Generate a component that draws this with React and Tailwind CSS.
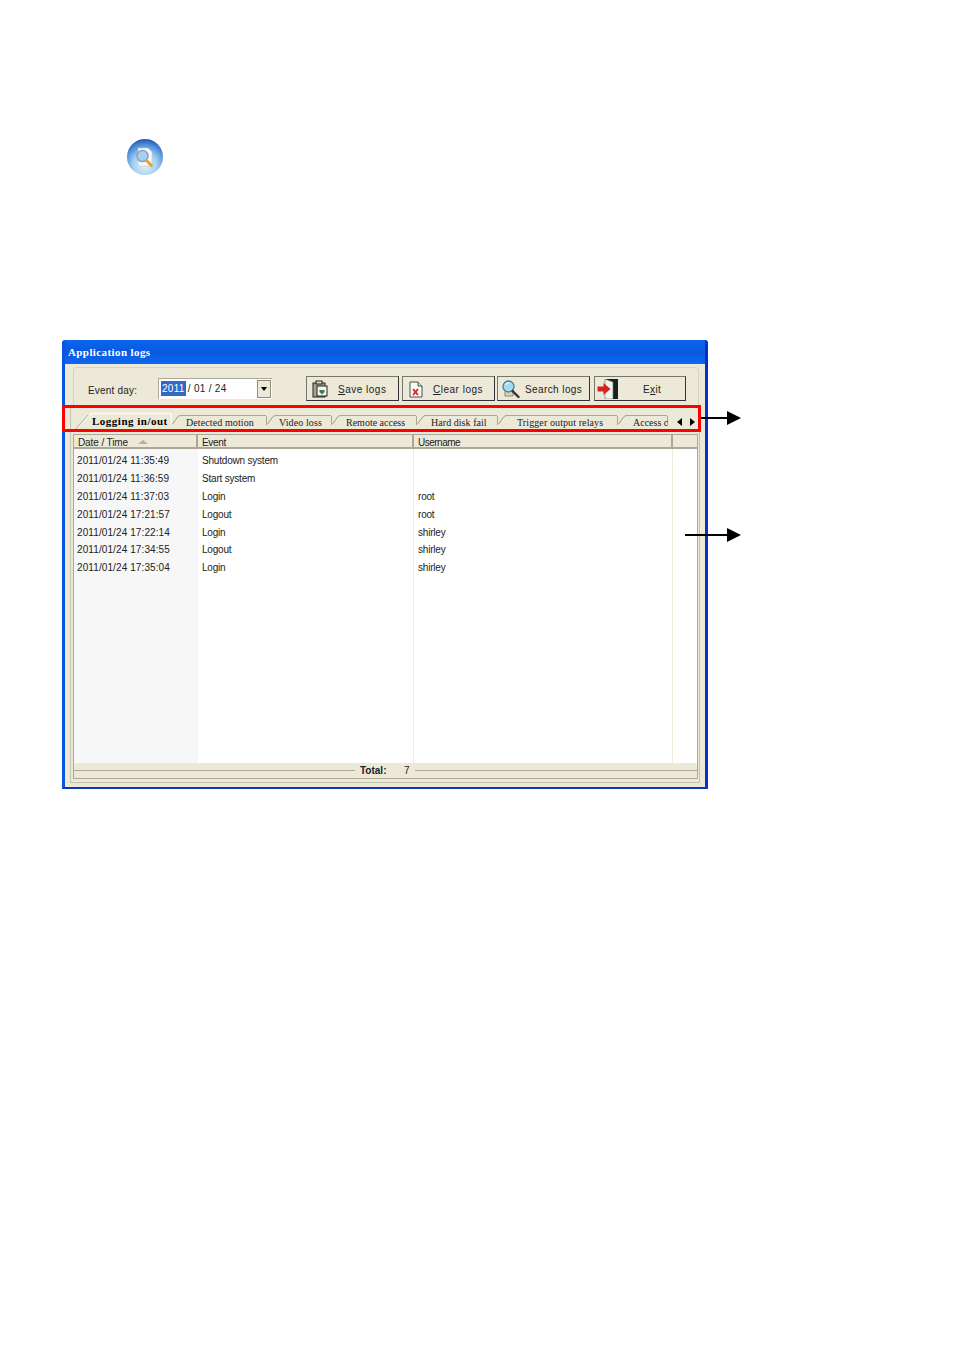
const SANS = 'font-["Liberation_Sans",sans-serif]';
const SERIF = 'font-["Liberation_Serif",serif]';

const TABS = [
  { label: 'Logging in/out', width: 'w-[97px]', text: 'pl-[17px] pb-px font-bold text-[11px] tracking-[0.5px]', active: true },
  { label: 'Detected motion', width: 'w-[95px]', text: 'pl-[14px] pt-px tracking-[0.1px]' },
  { label: 'Video loss', width: 'w-[65px]', text: 'pl-[12px] pt-px tracking-[0.1px]' },
  { label: 'Remote access', width: 'w-[85px]', text: 'pl-[14px] pt-px' },
  { label: 'Hard disk fail', width: 'w-[81px]', text: 'pl-[14px] pt-px tracking-[0.05px]' },
  { label: 'Trigger output relays', width: 'w-[120px]', text: 'pl-[19px] pt-px tracking-[0.1px]' },
  { label: 'Access c', width: 'w-[50px]', text: 'pl-[15px] pt-px' },
];

const ROWS = [
  ['2011/01/24 11:35:49', 'Shutdown system', ''],
  ['2011/01/24 11:36:59', 'Start system', ''],
  ['2011/01/24 11:37:03', 'Login', 'root'],
  ['2011/01/24 17:21:57', 'Logout', 'root'],
  ['2011/01/24 17:22:14', 'Login', 'shirley'],
  ['2011/01/24 17:34:55', 'Logout', 'shirley'],
  ['2011/01/24 17:35:04', 'Login', 'shirley'],
];

function AppIcon() {
  return (
    <svg width="38" height="38" viewBox="0 0 38 38" className="block">
      <defs>
        <radialGradient id="orb" cx="50%" cy="72%" r="72%">
          <stop offset="0%" stopColor="#e4f3fb" />
          <stop offset="45%" stopColor="#a6d2f0" />
          <stop offset="78%" stopColor="#4f8fd8" />
          <stop offset="100%" stopColor="#1f58b4" />
        </radialGradient>
      </defs>
      <circle cx="19" cy="19" r="18" fill="url(#orb)" />
      <path d="M12 10h10l4 4v14H12z" fill="#f4f7fb" stroke="#b4c8dc" strokeWidth="0.600" />
      <circle cx="16.500" cy="18" r="5.500" fill="#a8d0f2" stroke="#8aa4c6" strokeWidth="1.600" />
      <path d="M21 23l4.500 4.500" stroke="#e8a020" strokeWidth="2.800" strokeLinecap="round" />
    </svg>
  );
}

function SaveIcon() {
  return (
    <svg width="18" height="18" viewBox="0 0 18 18">
      <rect x="2" y="3" width="12" height="14" fill="#a8a68c" stroke="#222" />
      <rect x="5" y="1" width="6" height="3" fill="#ddd" stroke="#222" />
      <rect x="6" y="6" width="10" height="10" fill="#f4f4f0" stroke="#222" />
      <path d="M8.500 10h5v2l-2.500 2.500L8.500 12z" fill="#3d7a4a" />
    </svg>
  );
}

function ClearIcon() {
  return (
    <svg width="14" height="17" viewBox="0 0 14 17">
      <path d="M1 1h8l4 4v11H1z" fill="#fbfbf6" stroke="#4a4a4a" />
      <path d="M9 1v4h4" fill="#ddd" stroke="#4a4a4a" />
      <path d="M4 8l5 6M9 8l-5 6" stroke="#d8201c" strokeWidth="1.800" />
    </svg>
  );
}

function SearchIcon() {
  return (
    <svg width="19" height="19" viewBox="0 0 19 19">
      <path d="M4 7h8v9H4z" fill="#d8d4b8" stroke="#8a8870" />
      <circle cx="7.500" cy="6.500" r="5.500" fill="#a6dcf0" stroke="#4a7a98" strokeWidth="1.300" />
      <path d="M5 4.500a3.500 3.500 0 0 1 3-1.500" stroke="#fff" fill="none" />
      <path d="M11.500 11l6 6" stroke="#333" strokeWidth="2.400" strokeLinecap="round" />
    </svg>
  );
}

function ExitIcon() {
  return (
    <svg width="21" height="20" viewBox="0 0 21 20" className="shrink-0">
      <rect x="8" y="0" width="13" height="20" fill="#14241a" />
      <path d="M8 0l8 3v17H8z" fill="#f2f2ee" stroke="#666" strokeWidth="0.600" />
      <path d="M0.500 7.500h6V4l7 6-7 6v-3.500h-6z" fill="#d4231c" />
    </svg>
  );
}

function ToolButton({ icon, width, children, labelClass }) {
  return (
    <button className={`flex h-[25px] ${width} items-center border border-[#77776a] border-r-[#333] border-b-[#333] bg-[#ece9d8] pt-px text-[10px] text-[#222]`}>
      <span className="flex w-[22px] shrink-0 justify-center pl-[3px]">{icon}</span>
      <span className={labelClass}>{children}</span>
    </button>
  );
}

function Tab({ tab }) {
  return (
    <div className={`relative flex h-[19px] ${tab.width} shrink-0 items-center whitespace-nowrap ${SERIF} text-[10px] text-[#222] ${tab.text}`}>
      {tab.active ? (
        <svg width="97" height="19" viewBox="0 0 97 19" className="absolute left-0 top-0">
          <path d="M0.500 18.500L14 3Q15.500 1.500 18 1.500H95Q96.500 1.500 96.500 4V12" stroke="#fbfaf2" strokeWidth="1.500" fill="none" />
          <path d="M0.500 17.500L13.500 2.500" stroke="#a8a894" fill="none" />
        </svg>
      ) : (
        <>
          <svg width="16" height="19" viewBox="0 0 16 19" className="absolute left-0 top-0">
            <path d="M0.500 12L6 4.500Q7 3.500 10 3.500" stroke="#9a9a86" fill="none" />
          </svg>
          <span className="absolute left-[9px] right-[1px] top-[3px] h-px bg-[#a8a894]" />
          <span className="absolute right-0 top-[4px] h-[9px] w-px bg-[#a8a894]" />
        </>
      )}
      <span className={`relative ${tab.active ? 'text-black' : ''}`}>{tab.label}</span>
    </div>
  );
}

function Column({ width, index, className = '', cell, divider }) {
  return (
    <div className={`${width} shrink-0 pt-[3px] ${className} ${divider ? 'border-r border-[#ecebdc]' : ''}`}>
      {ROWS.map((row, i) => (
        <div key={i} className={`flex h-[17.800px] items-center whitespace-nowrap text-[10px] text-[#222] ${cell}`}>
          {row[index]}
        </div>
      ))}
    </div>
  );
}

function Arrow({ className, width }) {
  return (
    <div className={`absolute flex items-center ${className}`}>
      <span className={`h-[2px] ${width} bg-black`} />
      <svg width="14" height="14" viewBox="0 0 14 14" className="block">
        <path d="M0 0L14 7L0 14z" fill="#000" />
      </svg>
    </div>
  );
}

export default function App() {
  return (
    <div className={`relative h-[1351px] w-[954px] overflow-hidden bg-white ${SANS}`}>
      <div className="pl-[126px] pt-[138px]">
        <AppIcon />
      </div>

      <div className="ml-[62px] mt-[164px] flex h-[449px] w-[646px] flex-col rounded-t-[3px] border-x-[3px] border-b-[2px] border-l-[#0a55e0] border-r-[#0630c8] border-b-[#0a38b8] bg-[#ece9d8]">
        <div className={`flex h-[24px] shrink-0 items-center bg-gradient-to-b from-[#0a66ee] via-[#0a58e0] to-[#0c68f0] pl-[3px] ${SERIF} text-[11px] font-bold tracking-[0.4px] text-white`}>
          Application logs
        </div>

        <div className="flex flex-1 flex-col px-[5px] pb-[4px]">
          <div className="ml-[3px] mr-[1px] mt-[3px] flex h-[38px] shrink-0 items-start rounded-t-[4px] border-x border-t border-[#d6d3bf] pl-[14px] pt-[8px]">
            <span className="mt-[7px] w-[70px] text-[10px] tracking-[0.2px] text-[#222]">Event day:</span>
            <div className="mt-[2px] flex h-[21px] w-[114px] items-center border-l border-t border-[#aaa89a] bg-white pb-px pl-[2px] text-[10px] tracking-[0.3px] text-[#222]">
              <span className="bg-[#316ac5] px-[1px] text-white">2011</span>
              <span className="flex-1 whitespace-pre pl-[2px]">/ 01 / 24</span>
              <span className="mr-px mt-px flex h-[18px] w-[14px] items-center justify-center border border-[#8f8d80] bg-[#ece9d8]">
                <span className="h-0 w-0 border-x-[3.500px] border-t-[4px] border-x-transparent border-t-black" />
              </span>
            </div>
            <div className="ml-[34px] flex">
              <ToolButton icon={<SaveIcon />} width="w-[93px]" labelClass="pl-[9px] tracking-[0.5px]">
                <u>S</u>ave logs
              </ToolButton>
              <ToolButton icon={<ClearIcon />} width="w-[93px] ml-[3px]" labelClass="pl-[8px] tracking-[0.5px]">
                <u>C</u>lear logs
              </ToolButton>
              <ToolButton icon={<SearchIcon />} width="w-[93px] ml-[2px]" labelClass="pl-[5px] tracking-[0.4px]">
                Search logs
              </ToolButton>
              <ToolButton icon={<ExitIcon />} width="w-[92px] ml-[4px]" labelClass="pl-[26px] tracking-[0.4px]">
                E<u>x</u>it
              </ToolButton>
            </div>
          </div>

          <div className="flex flex-1 flex-col border-x border-b border-[#c4c2ae]">
            <div className="ml-[4px] mt-[7px] flex h-[19px] shrink-0 items-end">
              {TABS.map((tab) => (
                <Tab key={tab.label} tab={tab} />
              ))}
              <span className="ml-[9px] mb-[5px] h-0 w-0 border-y-[4px] border-r-[5px] border-y-transparent border-r-black" />
              <span className="ml-[8px] mb-[5px] h-0 w-0 border-y-[4px] border-l-[5px] border-y-transparent border-l-black" />
            </div>

            <div className="ml-[2px] mr-[1px] mb-[3px] mt-[3px] flex flex-1 flex-col border border-[#aca899]">
              <div className="flex h-[14px] shrink-0 border-b-[2px] border-[#aca899] text-[10px] text-[#222]">
                <div className="flex w-[124px] items-center border-r-[2px] border-[#aca899] pl-[4px] pt-[2px] tracking-[-0.1px]">
                  Date / Time
                  <span className="ml-[10px] h-0 w-0 border-x-[5px] border-b-[4px] border-x-transparent border-b-[#b4b2a2]" />
                </div>
                <div className="flex w-[216px] items-center border-r-[2px] border-[#aca899] pl-[4px] pt-[2px] tracking-[-0.3px]">Event</div>
                <div className="flex w-[259px] items-center border-r-[2px] border-[#aca899] pl-[4px] pt-[2px] tracking-[-0.5px]">Username</div>
              </div>

              <div className="flex flex-1 bg-white">
                <Column width="w-[124px]" index={0} className="bg-[#f7f7f7]" cell="pl-[3px] tracking-[0.1px]" />
                <Column width="w-[216px]" index={1} cell="pl-[4px] tracking-[-0.2px]" divider />
                <Column width="w-[259px]" index={2} cell="pl-[4px] tracking-[-0.2px]" divider />
              </div>

              <div className="flex h-[15px] shrink-0 items-center">
                <span className="h-px w-[281px] bg-[#aca899]" />
                <span className="w-[33px] pl-[5px] text-[10px] font-bold text-[#222]">Total:</span>
                <span className="w-[27px] pl-[16px] text-[10px] text-[#222]">7</span>
                <span className="h-px flex-1 bg-[#aca899]" />
              </div>
            </div>
          </div>
        </div>
      </div>

      {/* annotation overlays */}
      <div className="absolute left-[62px] top-[405px] h-[27px] w-[639px] border-[3px] border-[#ff0000]" />
      <Arrow className="left-[701px] top-[411px]" width="w-[26px]" />
      <Arrow className="left-[685px] top-[528px]" width="w-[42px]" />
    </div>
  );
}
